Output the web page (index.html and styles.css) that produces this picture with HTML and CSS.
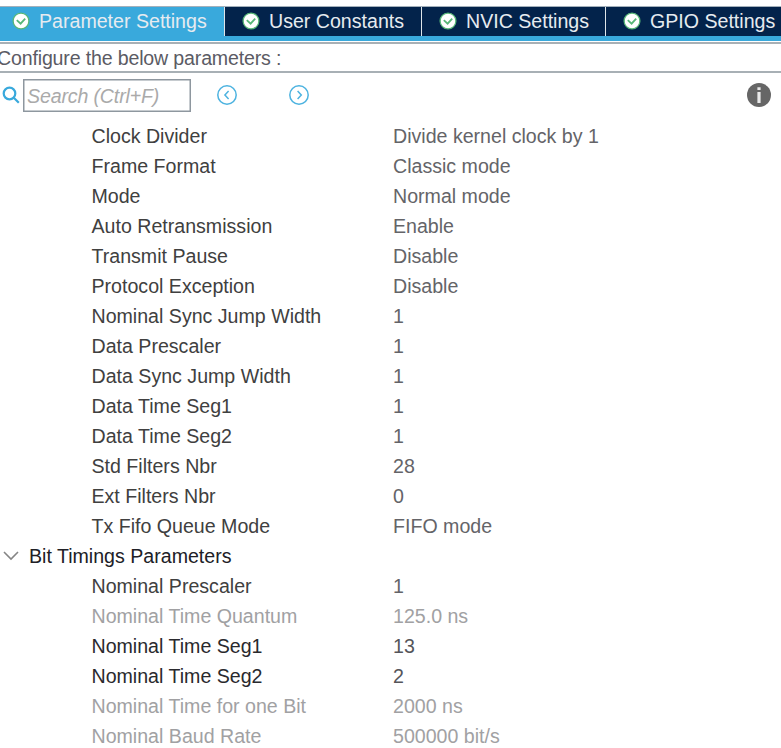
FILE: index.html
```
<!DOCTYPE html>
<html lang="en">
<head>
<meta charset="utf-8">
<title>Parameter Settings</title>
<link rel="stylesheet" href="styles.css">
</head>
<body>
<svg class="defs" width="0" height="0" aria-hidden="true">
  <symbol id="check" viewBox="0 0 18 18">
    <circle cx="9" cy="9" r="7.9" fill="#fff" stroke="#58b777" stroke-width="1.3"/>
    <path d="M4.8 8.2 8.6 11.7 13.2 6.6" fill="none" stroke="#58b777" stroke-width="1.8"/>
  </symbol>
</svg>
<nav class="tabs">
  <div class="tab tab-parameter active"><svg class="check"><use href="#check"/></svg><span>Parameter Settings</span></div>
  <div class="tab tab-user"><svg class="check"><use href="#check"/></svg><span>User Constants</span></div>
  <div class="tab tab-nvic"><svg class="check"><use href="#check"/></svg><span>NVIC Settings</span></div>
  <div class="tab tab-gpio"><svg class="check"><use href="#check"/></svg><span>GPIO Settings</span></div>
</nav>
<div class="caption"><span>Configure the below parameters :</span></div>
<div class="toolbar">
  <svg class="magnifier" viewBox="0 0 18 18"><circle cx="7.5" cy="7.5" r="5.8"/><path d="m11.8 11.8 5 5"/></svg>
  <div class="search">Search (Ctrl+F)</div>
  <svg class="arrow previous" viewBox="0 0 20 20"><circle cx="10" cy="10" r="9.2"/><path d="M11.6 6 7.9 10l3.7 4"/></svg>
  <svg class="arrow next" viewBox="0 0 20 20"><circle cx="10" cy="10" r="9.2"/><path d="m8.6 6 3.7 4-3.7 4"/></svg>
  <svg class="info" viewBox="0 0 24 24"><circle cx="12" cy="12" r="12" fill="#666"/><path d="M10.4 4.3h3.2v2.8h-3.2zM10.4 9h3.2v11h-3.2z" fill="#e9e9e9"/></svg>
</div>
<main class="list">
  <div class="row"><span>Clock Divider</span><span class="value">Divide kernel clock by 1</span></div>
  <div class="row"><span>Frame Format</span><span class="value">Classic mode</span></div>
  <div class="row"><span>Mode</span><span class="value">Normal mode</span></div>
  <div class="row"><span>Auto Retransmission</span><span class="value">Enable</span></div>
  <div class="row"><span>Transmit Pause</span><span class="value">Disable</span></div>
  <div class="row"><span>Protocol Exception</span><span class="value">Disable</span></div>
  <div class="row"><span>Nominal Sync Jump Width</span><span class="value">1</span></div>
  <div class="row"><span>Data Prescaler</span><span class="value">1</span></div>
  <div class="row"><span>Data Sync Jump Width</span><span class="value">1</span></div>
  <div class="row"><span>Data Time Seg1</span><span class="value">1</span></div>
  <div class="row"><span>Data Time Seg2</span><span class="value">1</span></div>
  <div class="row"><span>Std Filters Nbr</span><span class="value">28</span></div>
  <div class="row"><span>Ext Filters Nbr</span><span class="value">0</span></div>
  <div class="row"><span>Tx Fifo Queue Mode</span><span class="value">FIFO mode</span></div>
  <div class="group"><svg class="chevron" viewBox="0 0 16 10"><path d="m1 1 7 7 7-7"/></svg><span>Bit Timings Parameters</span></div>
  <div class="row"><span>Nominal Prescaler</span><span class="value">1</span></div>
  <div class="row disabled"><span>Nominal Time Quantum</span><span class="value">125.0 ns</span></div>
  <div class="row strong"><span>Nominal Time Seg1</span><span class="value">13</span></div>
  <div class="row strong"><span>Nominal Time Seg2</span><span class="value">2</span></div>
  <div class="row disabled"><span>Nominal Time for one Bit</span><span class="value">2000 ns</span></div>
  <div class="row disabled"><span>Nominal Baud Rate</span><span class="value">500000 bit/s</span></div>
</main>
</body>
</html>
```
FILE: styles.css
```
* { box-sizing: border-box; }
html, body { height: 100%; overflow: hidden; }
body {
  margin: 0;
  padding-top: 6px;
  background: #fff;
  font: 19.6px/30px "Liberation Sans", Arial, sans-serif;
  white-space: nowrap;
  color: #404040;
}
svg { display: block; flex: none; }
.defs { position: absolute; }
.tabs {
  display: flex;
  height: 35px;
  background: #39a9dc;
  border-top: 1px solid #a3b0bb;
}
.tab {
  display: flex;
  align-items: center;
  flex: none;
  height: 29px;
  background: #03234b;
  color: #e6ebf0;
  border-left: 1px solid #dfe5e9;
}
.tab span { position: relative; top: -1px; }
.check { width: 18px; height: 18px; margin-right: 9px; position: relative; top: -1px; }
.tab-parameter { width: 224px; padding-left: 12px; border-left: 0; }
.tab-user { width: 197px; padding-left: 17px; }
.tab-nvic { width: 184px; padding-left: 17px; }
.tab-gpio { width: 176px; padding-left: 17px; }
.active { background: #39a9dc; }
.caption {
  height: 31px;
  margin-top: 1px;
  border-top: 2px solid #a8b0b5;
  border-bottom: 2px solid #a8b0b5;
  line-height: 29px;
  letter-spacing: -.17px;
  color: #5b5b64;
}
.caption span { margin-left: -3px; }
.toolbar { display: flex; align-items: center; height: 44px; }
.magnifier { width: 18px; height: 18px; margin-left: 2px; fill: none; stroke: #39a9dc; stroke-width: 2.2; }
.search {
  width: 168px;
  height: 33px;
  margin-left: 3px;
  padding-left: 3px;
  border: 1px solid #8e979f;
  box-shadow: inset 0 0 0 .5px #8e979f;
  line-height: 32px;
  letter-spacing: -.15px;
  font-style: italic;
  color: #aaa;
}
.arrow { width: 20px; height: 20px; fill: none; stroke: #4db3e0; stroke-width: 1.5; }
.previous { margin-left: 26px; }
.next { margin-left: 52px; }
.info { width: 24px; height: 24px; margin-left: auto; margin-right: 10px; }
.list { padding-top: 4px; }
.row { display: grid; grid-template-columns: 301.5px 1fr; height: 30px; padding-left: 91.5px; }
.value { color: #646468; }
.strong { color: #29292d; }
.strong .value { color: #55555a; }
.disabled, .disabled .value { color: #a1a1a3; }
.group { display: flex; align-items: center; height: 30px; color: #202026; }
.chevron { width: 16px; height: 10px; margin: 0 10px 0 3px; fill: none; stroke: #858585; stroke-width: 1.6; }
```
